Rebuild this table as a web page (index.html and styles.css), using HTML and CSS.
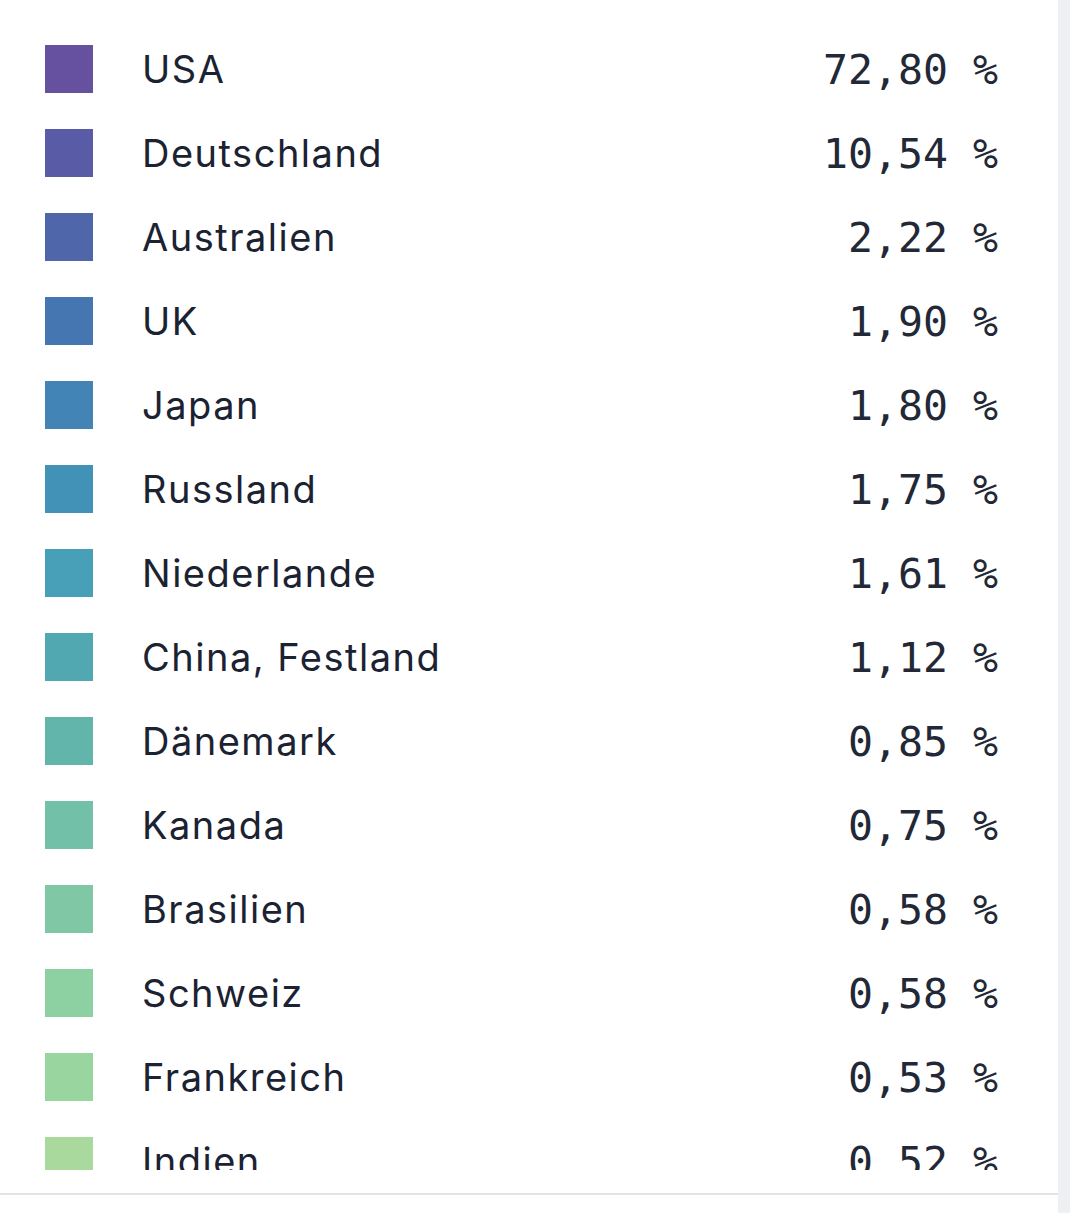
FILE: index.html
```html
<!DOCTYPE html>
<html lang="de">
<head>
    <meta charset="UTF-8">
    <meta name="viewport" content="width=device-width, initial-scale=1.0">
    <title>Länder</title>
    <link rel="stylesheet" href="styles.css">
</head>
<body>
    <div class="page">
        <div class="card">
            <ul class="legend">
                <li class="row"><span class="swatch c1"></span><span class="name">USA</span><span class="value">72,80 %</span></li>
                <li class="row"><span class="swatch c2"></span><span class="name">Deutschland</span><span class="value">10,54 %</span></li>
                <li class="row"><span class="swatch c3"></span><span class="name">Australien</span><span class="value">2,22 %</span></li>
                <li class="row"><span class="swatch c4"></span><span class="name">UK</span><span class="value">1,90 %</span></li>
                <li class="row"><span class="swatch c5"></span><span class="name">Japan</span><span class="value">1,80 %</span></li>
                <li class="row"><span class="swatch c6"></span><span class="name">Russland</span><span class="value">1,75 %</span></li>
                <li class="row"><span class="swatch c7"></span><span class="name">Niederlande</span><span class="value">1,61 %</span></li>
                <li class="row"><span class="swatch c8"></span><span class="name">China, Festland</span><span class="value">1,12 %</span></li>
                <li class="row"><span class="swatch c9"></span><span class="name">Dänemark</span><span class="value">0,85 %</span></li>
                <li class="row"><span class="swatch c10"></span><span class="name">Kanada</span><span class="value">0,75 %</span></li>
                <li class="row"><span class="swatch c11"></span><span class="name">Brasilien</span><span class="value">0,58 %</span></li>
                <li class="row"><span class="swatch c12"></span><span class="name">Schweiz</span><span class="value">0,58 %</span></li>
                <li class="row"><span class="swatch c13"></span><span class="name">Frankreich</span><span class="value">0,53 %</span></li>
                <li class="row"><span class="swatch c14"></span><span class="name">Indien</span><span class="value">0,52 %</span></li>
            </ul>
        </div>
        <div class="card next"></div>
    </div>
</body>
</html>
```

FILE: styles.css
```css
body {
    margin: 0;
    padding: 0;
    background: #eff0f3;
    font-family: Inter, "Noto Sans", sans-serif;
    color: #1b2232;
}
.page {
    width: 1058px;
    height: 1213px;
    overflow: hidden;
}
.card {
    background: #fff;
    height: 1195px;
    border-bottom: 2px solid #e3e4e6;
    box-sizing: border-box;
}
.card.next {
    height: 40px;
    border-bottom: none;
}
.legend {
    list-style: none;
    margin: 0;
    padding: 27px 0 0 0;
    height: 1170px;
    box-sizing: border-box;
    overflow: hidden;
}
.row {
    display: flex;
    align-items: center;
    height: 84px;
    padding: 0 60px 0 45px;
}
.swatch {
    width: 48px;
    height: 48px;
    flex-shrink: 0;
}
.name {
    flex: 1;
    margin-left: 49px;
    font-size: 38px;
    letter-spacing: 1.5px;
}
.value {
    font-family: "DejaVu Sans Mono", "Liberation Mono", monospace;
    font-size: 41.5px;
    white-space: pre;
    color: #222836;
}
.c1 { background: #6650a0; }
.c2 { background: #5a5ba6; }
.c3 { background: #4f66aa; }
.c4 { background: #4676b2; }
.c5 { background: #4184b5; }
.c6 { background: #4291b6; }
.c7 { background: #479fb8; }
.c8 { background: #52a8b0; }
.c9 { background: #62b5ab; }
.c10 { background: #73c0a8; }
.c11 { background: #80c8a5; }
.c12 { background: #8dd0a2; }
.c13 { background: #99d59f; }
.c14 { background: #aad99d; }
```
